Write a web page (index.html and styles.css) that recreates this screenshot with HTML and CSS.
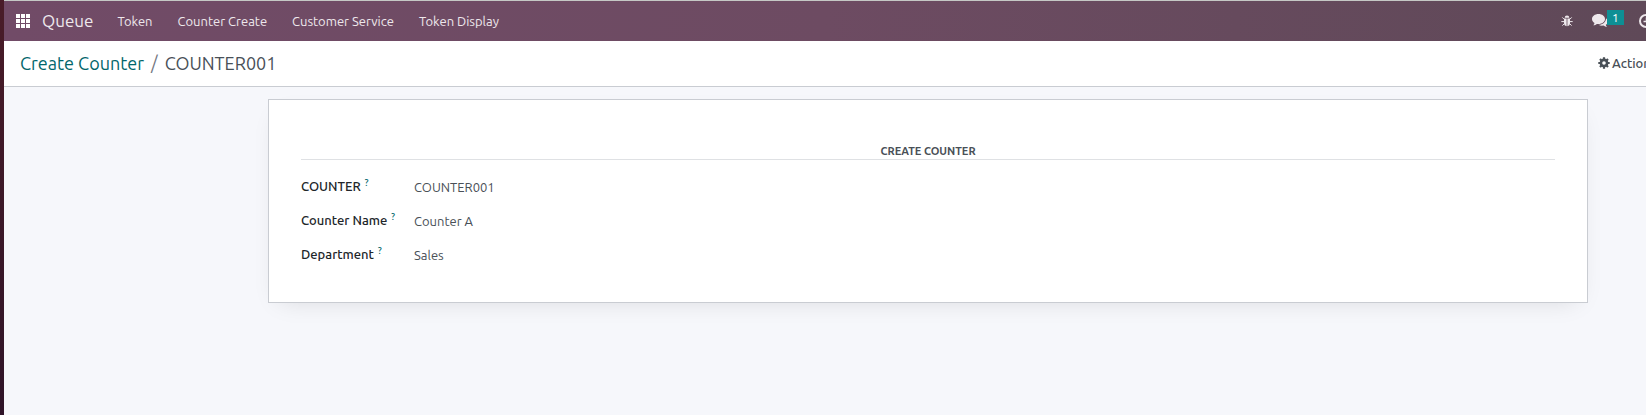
FILE: index.html
```html
<!DOCTYPE html>
<html lang="en">
<head>
<meta charset="utf-8">
<title>COUNTER001 - Queue</title>
<link rel="stylesheet" href="styles.css">
</head>
<body>
<div class="app">
  <header class="navbar">
    <button class="apps" type="button" aria-label="Applications">
      <svg width="14" height="14" viewBox="0 0 14 14" fill="currentColor" shape-rendering="crispEdges"><path d="M0 0h4v4H0zM5 0h4v4H5zM10 0h4v4h-4zM0 5h4v4H0zM5 5h4v4H5zM10 5h4v4h-4zM0 10h4v4H0zM5 10h4v4H5zM10 10h4v4h-4z"/></svg>
    </button>
    <a class="brand" href="#">Queue</a>
    <nav class="menu">
      <a href="#">Token</a>
      <a href="#">Counter Create</a>
      <a href="#">Customer Service</a>
      <a href="#">Token Display</a>
    </nav>
    <div class="systray">
      <button class="tray bug" type="button" aria-label="Debug">
        <svg width="12" height="12" viewBox="0 0 12 12"><path d="M3.700 2.800a2.300 2.300 0 0 1 4.600 0z" fill="currentColor"/><path d="M3 3.600h2.600v7.600C4 11 3 9.800 3 8zM6.400 3.600H9V8c0 1.800-1 3-2.600 3.200z" fill="currentColor"/><path d="M3.200 4.300 1.300 2.400M8.800 4.300l1.900-1.900M3 6.600H.3M9 6.600h2.700M3.400 8.600l-2 2M8.600 8.600l2 2" stroke="currentColor" fill="none"/></svg>
      </button>
      <button class="tray chat" type="button" aria-label="Messages">
        <svg width="16" height="14" viewBox="0 0 16 14" fill="currentColor"><path d="M6.500 0C10.200 0 13 2.200 13 5S10.200 10 6.500 10c-.6 0-1.100 0-1.600-.1-1 .8-2.100 1.300-3.600 1.400.7-.6 1.100-1.300 1.200-2.200C1 8.200 0 6.700 0 5 0 2.200 2.900 0 6.500 0z"/><path d="M14 4.200c1.200.8 1.900 1.900 1.900 3.200 0 1.400-.8 2.600-2.100 3.400.1.900.6 1.600 1.300 2.200-1.400-.1-2.600-.6-3.600-1.400-1.800.3-3.700 0-5-.8 4 .1 7.500-2.600 7.500-6.600z"/></svg>
        <span class="badge">1</span>
      </button>
      <button class="tray clock" type="button" aria-label="Activities">
        <svg width="14" height="14" viewBox="0 0 14 14" fill="none" stroke="currentColor" stroke-width="2"><circle cx="7" cy="7" r="6"/><path d="M7.500 3.500v4H4.500" stroke-width="1.500"/></svg>
      </button>
    </div>
  </header>
  <div class="control-panel">
    <div class="breadcrumb">
      <a href="#">Create Counter</a><span class="slash">/</span><span>COUNTER001</span>
    </div>
    <button class="action" type="button">
      <svg width="12" height="12" viewBox="0 0 12 12"><circle cx="6" cy="6" r="3.100" fill="none" stroke="currentColor" stroke-width="2.600"/><path d="M6 .3v2.500M6 9.200v2.500M.3 6h2.500M9.200 6h2.500M2 2l1.700 1.700M8.300 8.300 10 10M10 2 8.300 3.700M3.700 8.300 2 10" stroke="currentColor" stroke-width="2.200"/></svg>
      <span>Action</span>
    </button>
  </div>
  <main class="content">
    <section class="sheet">
      <h2 class="title">CREATE COUNTER</h2>
      <dl class="fields">
        <dt>COUNTER<sup>?</sup></dt><dd>COUNTER001</dd>
        <dt>Counter Name<sup>?</sup></dt><dd>Counter A</dd>
        <dt>Department<sup>?</sup></dt><dd>Sales</dd>
      </dl>
    </section>
  </main>
</div>
</body>
</html>
```
FILE: styles.css
```css
* {
  box-sizing: border-box;
}

body {
  margin: 0;
  font-family: Ubuntu, "Noto Sans", sans-serif;
  font-size: 13px;
  line-height: 20px;
  color: #495057;
  background: #f6f7fb;
}

a {
  text-decoration: none;
}

button {
  padding: 0;
  border: 0;
  background: none;
  color: inherit;
  font: inherit;
}

svg {
  display: block;
  flex: none;
}

.app {
  display: flex;
  flex-direction: column;
  min-height: 100vh;
  border-left: 4px solid;
  border-image: linear-gradient(#491c28, #2f1428) 1;
  overflow: hidden;
}

.navbar {
  display: flex;
  align-items: center;
  height: 41px;
  padding-left: 12px;
  border-top: 1px solid #c5c8c5;
  background: linear-gradient(90deg, #714b67 0%, #6d4b62 50%, #5f4958 100%);
  color: #eee8ec;
}

.navbar a {
  color: inherit;
}

.apps {
  color: #fff;
}

.brand {
  margin-left: 12px;
  font-size: 17px;
}

.menu {
  display: flex;
  gap: 25px;
  margin-left: 24px;
}

.systray {
  display: flex;
  align-items: center;
  justify-content: flex-start;
  width: 85px;
  margin-left: auto;
}

.tray {
  flex: none;
}

.chat {
  display: flex;
  align-items: center;
  margin-left: 19px;
}

.badge {
  width: 17px;
  height: 15px;
  margin-bottom: 8px;
  margin-left: -1px;
  background: #0e8f94;
  color: #fff;
  font-size: 12px;
  line-height: 15px;
}

.clock {
  margin-left: 15px;
}

.control-panel {
  display: flex;
  align-items: center;
  height: 46px;
  padding-bottom: 2px;
  padding-left: 16px;
  border-bottom: 1px solid #c9ccd2;
  background: #fff;
}

.breadcrumb {
  font-size: 18px;
}

.breadcrumb a {
  color: #01666b;
}

.slash {
  margin: 0 7px;
  color: #74777f;
}

.action {
  display: flex;
  align-items: center;
  gap: 2px;
  width: 48px;
  margin-left: auto;
  font-weight: 500;
  white-space: nowrap;
}

.content {
  padding: 12px 58px 12px 264px;
}

.sheet {
  padding: 43px 32px 37px;
  border: 1px solid #c9ccd2;
  background: #fff;
  box-shadow: 0 8px 24px -12px rgba(0, 0, 0, 0.15);
}

.title {
  margin: 0 0 16px;
  border-bottom: 1px solid #dfe1e4;
  font-size: 11px;
  font-weight: 700;
  line-height: 16px;
  text-align: center;
}

.fields {
  display: grid;
  grid-template-columns: 113px 1fr;
  row-gap: 13px;
  margin: 0;
}

.fields dt {
  color: #212529;
  font-weight: 500;
}

.fields dd {
  margin: 0;
  padding-top: 1px;
}

.fields sup {
  margin-left: 4px;
  color: #01666b;
  font-size: 9px;
  line-height: 1;
}
```
